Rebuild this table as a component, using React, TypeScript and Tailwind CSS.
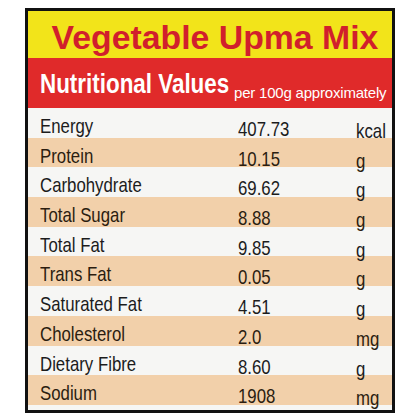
import React from "react";

const rows: [string, string, string][] = [
  ["Energy", "407.73", "kcal"],
  ["Protein", "10.15", "g"],
  ["Carbohydrate", "69.62", "g"],
  ["Total Sugar", "8.88", "g"],
  ["Total Fat", "9.85", "g"],
  ["Trans Fat", "0.05", "g"],
  ["Saturated Fat", "4.51", "g"],
  ["Cholesterol", "2.0", "mg"],
  ["Dietary Fibre", "8.60", "g"],
  ["Sodium", "1908", "mg"],
];

const sans = '"Liberation Sans", Arial, sans-serif';

export default function App() {
  return (
    <div className="w-[420px] h-[420px] bg-white pt-[8px] pl-[25px]">
      <div className="w-[370px] h-[405px] border-[3px] border-[#111] flex flex-col bg-[#f6f6f4]">
        <div className="h-[47px] shrink-0 bg-[#f2e41a] flex items-start justify-center pt-[10px] pl-[10px]">
          <span
            className="text-[33.8px] leading-none font-bold text-[#d11f2c] whitespace-nowrap"
            style={{ fontFamily: sans }}
          >
            Vegetable Upma Mix
          </span>
        </div>
        <div className="h-[50px] shrink-0 bg-[#e02a2a] flex items-start pl-[12px] pt-[12px]">
          <span className="w-[194px] shrink-0 whitespace-nowrap">
            <span
              className="inline-block text-[28px] leading-none font-bold text-white scale-x-[0.8] origin-left"
              style={{ fontFamily: sans }}
            >
              Nutritional Values
            </span>
          </span>
          <span
            className="mt-[15px] text-[15px] leading-none text-white whitespace-nowrap"
            style={{ fontFamily: sans, letterSpacing: "-0.2px" }}
          >
            per 100g approximately
          </span>
        </div>
        <div className="flex flex-col">
          {rows.map(([l, v, u], i) => (
            <div
              key={l}
              className={`h-[29.7px] shrink-0 grid grid-cols-[198px_118px_1fr] pl-[12px] text-[21px] leading-none ${
                i % 2 === 1 ? "bg-[#f2d0aa] text-[#2b1d10]" : "bg-[#f6f6f4] text-[#1c1c1c]"
              }`}
              style={{ fontFamily: sans }}
            >
              <span className="relative z-10 pt-[7px] whitespace-nowrap">
                <span className="inline-block scale-x-[0.8] origin-left">{l}</span>
              </span>
              <span className="relative z-10 pt-[10px] whitespace-nowrap">
                <span className="inline-block scale-x-[0.8] origin-left">{v}</span>
              </span>
              <span className="relative z-10 pt-[12px] whitespace-nowrap">
                <span className="inline-block scale-x-[0.8] origin-left">{u}</span>
              </span>
            </div>
          ))}
        </div>
      </div>
    </div>
  );
}
